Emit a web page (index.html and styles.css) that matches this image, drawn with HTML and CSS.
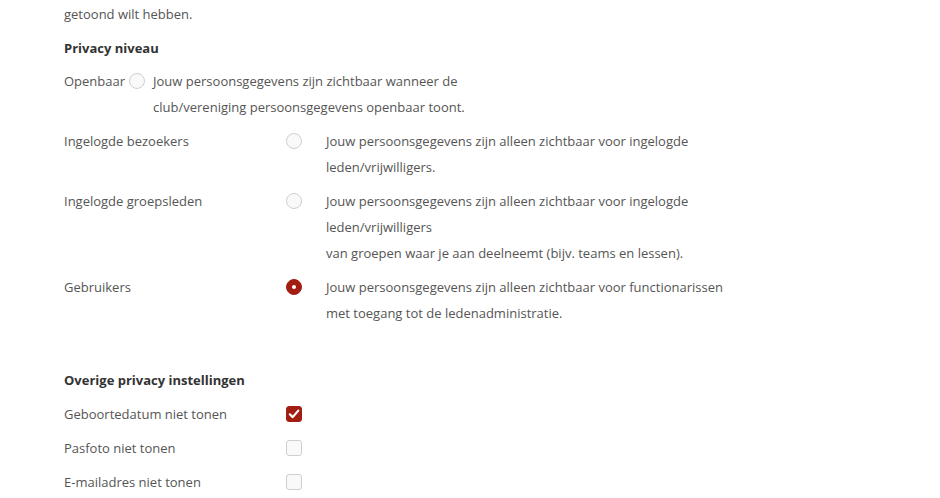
FILE: index.html
```html
<!DOCTYPE html>
<html>
<head>
    <link rel="stylesheet" href="styles.css">
</head>
<body>
    <div class="container">
        <p class="intro">getoond wilt hebben.</p>

        <h4 class="section-title">Privacy niveau</h4>

        <div class="inline-row">
            <span class="label">Openbaar</span>
            <span class="radio"></span>
            <span class="desc">Jouw persoonsgegevens zijn zichtbaar wanneer de club/vereniging persoonsgegevens openbaar toont.</span>
        </div>

        <div class="row">
            <span class="label label-col">Ingelogde bezoekers</span>
            <span class="radio"></span>
            <span class="desc">Jouw persoonsgegevens zijn alleen zichtbaar voor ingelogde leden/vrijwilligers.</span>
        </div>

        <div class="row">
            <span class="label label-col">Ingelogde groepsleden</span>
            <span class="radio"></span>
            <span class="desc">Jouw persoonsgegevens zijn alleen zichtbaar voor ingelogde leden/vrijwilligers<br>van groepen waar je aan deelneemt (bijv. teams en lessen).</span>
        </div>

        <div class="row">
            <span class="label label-col">Gebruikers</span>
            <span class="radio checked"></span>
            <span class="desc">Jouw persoonsgegevens zijn alleen zichtbaar voor functionarissen met toegang tot de ledenadministratie.</span>
        </div>

        <h4 class="section-title other">Overige privacy instellingen</h4>

        <div class="row">
            <span class="label label-col">Geboortedatum niet tonen</span>
            <span class="checkbox checked">
                <svg width="12" height="12" viewBox="0 0 12 12"><path d="M1.8 6.3 L4.7 9.1 L10.3 2.6" fill="none" stroke="#fff" stroke-width="2.2" stroke-linecap="round" stroke-linejoin="round"/></svg>
            </span>
        </div>
        <div class="row">
            <span class="label label-col">Pasfoto niet tonen</span>
            <span class="checkbox"></span>
        </div>
        <div class="row">
            <span class="label label-col">E-mailadres niet tonen</span>
            <span class="checkbox"></span>
        </div>
    </div>
</body>
</html>
```

FILE: styles.css
```css
body {
    margin: 0;
    background: #fff;
    font-family: "Open Sans", "Liberation Sans", sans-serif;
    font-size: 13px;
    line-height: 26px;
    color: #555;
}

.container {
    padding: 1px 64px 0 64px;
}

.intro {
    margin: 0;
}

.section-title {
    margin: 8px 0 7px 0;
    font-size: 13px;
    font-weight: 700;
    color: #333;
}

.section-title.other {
    margin-top: 41px;
}

.inline-row {
    display: flex;
    align-items: flex-start;
}

.inline-row .radio {
    margin-left: 4px;
    margin-right: 8px;
}

.row {
    display: flex;
    align-items: flex-start;
    margin-top: 8px;
}

.label-col {
    width: 222px;
    flex-shrink: 0;
}

.row .radio {
    margin-right: 24px;
}

.desc {
    width: 400px;
}

.radio {
    flex-shrink: 0;
    box-sizing: border-box;
    width: 16px;
    height: 16px;
    margin-top: 5px;
    border: 1px solid #cfcfcf;
    border-radius: 50%;
    background: #f9f9f9;
}

.radio.checked {
    border-color: #a21d12;
    background: #a21d12;
    position: relative;
}

.radio.checked::after {
    content: "";
    position: absolute;
    left: 5px;
    top: 5px;
    width: 4px;
    height: 4px;
    border-radius: 50%;
    background: #fff;
}

.checkbox {
    flex-shrink: 0;
    box-sizing: border-box;
    width: 16px;
    height: 16px;
    margin-top: 5px;
    border: 1px solid #cfcfcf;
    border-radius: 3px;
    background: #f9f9f9;
    display: flex;
    align-items: center;
    justify-content: center;
}

.checkbox.checked {
    border-color: #a21d12;
    background: #a21d12;
}
```
